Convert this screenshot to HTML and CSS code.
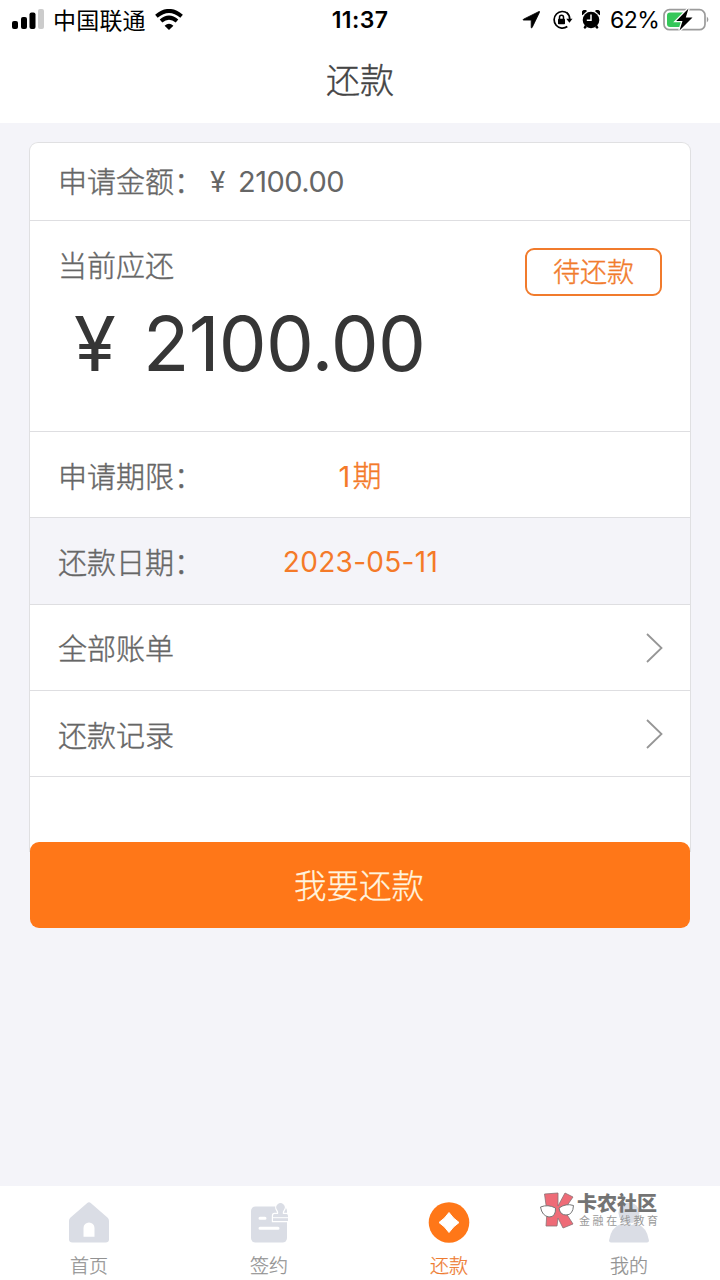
FILE: index.html
```html
<!DOCTYPE html>
<html lang="zh-CN">
<head>
<meta charset="utf-8">
<title>还款</title>
<link rel="stylesheet" href="styles.css">
</head>
<body>
<div class="screen">
  <header class="header">
    <div class="status">
      <div class="status-left">
        <svg class="signal" width="32" height="20" viewBox="0 0 32 20"><rect x="0" y="12" width="6" height="8" rx="2"/><rect x="9" y="8" width="6" height="12" rx="2"/><rect x="17.500" y="3.500" width="6" height="16.500" rx="2"/><rect x="26" y="0" width="6" height="20" rx="2" fill="#ccc"/></svg>
        <span class="carrier">中国联通</span>
        <svg class="wifi" width="28" height="21" viewBox="0 0 28 21"><g fill="none" stroke="#000" stroke-width="3.900"><path d="M1.400 7.200Q14-3.400 26.600 7.200"/><path d="M6 12.100Q14 5.200 22 12.100"/></g><path d="M9.600 16.700Q14 13 18.400 16.700L14 21Z"/></svg>
      </div>
      <time class="clock">11:37</time>
      <div class="status-right">
        <svg class="locate" width="18" height="18" viewBox="0 0 18 18"><path d="M17 .5Q18 .2 17.500 1.300L10.200 16.400Q9.500 17.600 9.200 16.300V9.100H1.700Q.3 8.900 1.500 8.200Z" stroke="#000" stroke-width=".8"/></svg>
        <svg class="rotation" width="21" height="20" viewBox="0 0 21 20"><path d="M15.700 3.400A8.300 8.300 0 1 0 15.300 16.500M14.600 2.500A8.300 8.300 0 0 1 17.700 9" fill="none" stroke="#000" stroke-width="1.700"/><path d="M14.300 8.700H20.500L17.400 12.700Z"/><rect x="6" y="8.800" width="7" height="5.500" rx=".8"/><path d="M7.500 9V7.300a2 2 0 0 1 4 0V9" fill="none" stroke="#000" stroke-width="1.500"/></svg>
        <svg class="alarm" width="18" height="20" viewBox="0 0 18 20"><circle cx="9" cy="10" r="8.300"/><path d="M.4 5.300A3 3 0 0 1 5.100 1Z M17.600 5.300A3 3 0 0 0 12.900 1Z M3 15L5 17L3 19L1.500 17.600Z M15 15L13 17L15 19L16.500 17.600Z"/><path d="M9 4.500V10.300H4.800" fill="none" stroke="#fff" stroke-width="1.500"/></svg>
        <span class="percent">62%</span>
        <svg class="battery" width="47" height="24" viewBox="0 0 47 24"><rect x="1" y="1.700" width="41" height="20" rx="5.500" fill="#fff" stroke="#9b9b9b" stroke-width="1.700"/><path d="M43.800 8.500Q47 11.500 43.800 14.500Z" fill="#999"/><path d="M7 4.500H20V19H7Q4 19 4 16V7.500Q4 4.500 7 4.500Z" fill="#35c759"/><path d="M25.500 .5L13.200 13H19.500L16.500 22.500L29.500 9.500H22.800Z" stroke="#fff" stroke-width="2.500" paint-order="stroke"/></svg>
      </div>
    </div>
    <h1 class="title">还款</h1>
  </header>

  <main class="content">
    <section class="card">
      <div class="row row-amount"><span class="label">申请金额：</span><span class="yen">¥</span><span class="value">2100.00</span></div>
      <div class="row due">
        <div>
          <div class="label">当前应还</div>
          <div class="due-amount"><span class="due-yen">¥</span><span>2100.00</span></div>
        </div>
        <span class="badge">待还款</span>
      </div>
      <div class="row line"><span class="label">申请期限：</span><span class="accent term">1<span class="unit">期</span></span></div>
      <div class="row line shaded"><span class="label">还款日期：</span><span class="accent date">2023-05-11</span></div>
      <div class="row line link"><span class="label">全部账单</span><svg class="chevron" width="17" height="30" viewBox="0 0 17 30"><path d="M1 1L15.500 15L1 29"/></svg></div>
      <div class="row line link"><span class="label">还款记录</span><svg class="chevron" width="17" height="30" viewBox="0 0 17 30"><path d="M1 1L15.500 15L1 29"/></svg></div>
      <div class="spacer"></div>
    </section>
    <button class="repay">我要还款</button>
  </main>

  <nav class="tabs">
    <a class="tab"><svg width="42" height="42" viewBox="0 0 42 42"><path fill="#dadde5" fill-rule="evenodd" d="M19 1.200Q21-.5 23 1.200L39.700 15.700Q41 17 41 19V37.500Q41 40.500 37.500 40.500H4.500Q1 40.500 1 37.500V19Q1 17 2.300 15.700ZM15.500 34.700H26.500V26A5.500 5.500 0 0 0 15.500 26Z"/></svg><span>首页</span></a>
    <a class="tab"><svg width="42" height="42" viewBox="0 0 42 42"><rect x="3" y="4.500" width="36" height="36" rx="4.500" fill="#dadde5"/><path d="M29.200 8A4.200 4.200 0 1 1 35.800 8Q34.300 10 35 12H38.500Q40 12 40 14V19H25V14Q25 12 26.500 12H30Q30.700 10 29.200 8Z" fill="#dadde5" stroke="#fff" stroke-width="2.400" paint-order="stroke"/><path d="M25 15.700H40" stroke="#fff" stroke-width="1"/><path d="M12 16.300H17M12 26.300H30" stroke="#fff" stroke-width="3" stroke-linecap="round"/></svg><span>签约</span></a>
    <a class="tab active"><svg width="42" height="42" viewBox="0 0 42 42"><circle cx="21" cy="20.500" r="20.300" fill="#ff7718"/><path d="M21 10.500Q25 16.500 31 20.500Q25 24.500 21 30.500Q17 24.500 11 20.500Q17 16.500 21 10.500Z" fill="#fff" stroke="#fff" stroke-linejoin="round"/></svg><span>还款</span></a>
    <a class="tab"><svg width="42" height="42" viewBox="0 0 42 42"><circle cx="21" cy="11" r="10.500" fill="#dadde5"/><path d="M1 38.500Q3 25 14 21.500Q21 25 28 21.500Q39 25 41 38.500Q41 40.500 39 40.500H3Q1 40.500 1 38.500Z" fill="#dadde5"/></svg><span>我的</span></a>
    <div class="watermark">
      <svg width="36" height="38" viewBox="0 0 36 38"><path d="M4.500 2L18 1V14L25 1L33 5L24 18L33 32L23 36L18 26L17 34L6 34L7 20Z" fill="#ee6b77" stroke="#8a7175" stroke-width=".8"/><path d="M.5 15Q8 12 15.500 16Q16 25 9 25Q2 24 .5 15ZM19 16Q26 11 33.500 13.500Q33 23 26 23Q20 23 19 16Z" fill="#fff" stroke="#777"/></svg>
      <div class="brand"><b>卡农社区</b><span>金融在线教育</span></div>
    </div>
  </nav>
</div>
</body>
</html>
```

FILE: styles.css
```css
* { box-sizing: border-box; }
body { margin: 0; font-family: Inter, "Noto Sans CJK SC", sans-serif; background: #f4f4f9; }
svg { display: block; flex: none; }
.screen { width: 720px; height: 1280px; display: flex; flex-direction: column; background: #f4f4f9; overflow: hidden; }
.header { height: 123px; background: #fff; }
.status { height: 39px; display: grid; grid-template-columns: 1fr auto 1fr; align-items: center; color: #000; }
.status-left { display: flex; align-items: center; padding-left: 12px; }
.signal { margin-top: -2px; }
.carrier { margin-left: 9px; font-size: 23px; line-height: 38px; letter-spacing: .2px; padding-top: 1px; }
.wifi { margin: -2px 0 0 9px; }
.clock { font-size: 23px; line-height: 39px; font-weight: 600; letter-spacing: .4px; padding-top: 1px; }
.status-right { display: flex; align-items: center; justify-content: flex-end; padding-right: 10px; }
.rotation { margin-left: 12px; }
.alarm { margin-left: 9px; }
.percent { margin-left: 10px; width: 50px; font-size: 23px; letter-spacing: -.5px; white-space: nowrap; }
.battery { margin-left: 3px; }
.title { margin: 0; height: 84px; color: #444; font-size: 34px; line-height: 84px; font-weight: 300; text-align: center; -webkit-text-stroke: .4px; }
.content { flex: 1; padding: 19px 29px 0; }
.card { border: 1px solid #e0e0e2; border-bottom: 0; border-radius: 9px 9px 0 0; background: #fff; overflow: hidden; }
.row { padding: 0 27px 0 28px; border-bottom: 1px solid #dedee1; color: #666; font-size: 29px; }
.label { font-size: 29px; font-weight: 300; white-space: nowrap; -webkit-text-stroke: .4px; }
.row-amount { display: flex; align-items: center; height: 78px; }
.row-amount .label { width: 152px; line-height: 40px; margin-top: 2px; }
.yen { width: 28px; font-size: 28px; }
.value { font-size: 29px; letter-spacing: -.5px; }
.due { display: flex; justify-content: space-between; height: 211px; padding-top: 27px; }
.due .label { line-height: 38px; }
.due-amount { display: flex; padding-left: 16px; color: #363636; font-size: 76px; line-height: 92px; margin-top: 11px; letter-spacing: -.7px; }
.due-yen { width: 69px; }
.badge { width: 137px; height: 48px; margin-right: 1px; border: 2px solid #f17b2c; border-radius: 9px; color: #f17b2c; font-size: 27px; line-height: 45px; text-align: center; font-weight: 300; -webkit-text-stroke: .4px; }
.line { display: grid; grid-template-columns: 160px 1fr 160px; align-items: center; height: 86.300px; }
.accent { color: #f47a29; text-align: center; font-size: 28px; }
.term { font-size: 29px; margin: -2px 0 0 -1px; }
.unit { margin-left: 2px; font-weight: 300; -webkit-text-stroke: .4px; }
.date { letter-spacing: .3px; padding-top: 2px; }
.shaded { background: #f4f4f9; }
.link .chevron { grid-column: 3; justify-self: end; margin-top: 1px; }
.chevron path { fill: none; stroke: #969696; stroke-width: 1.800; }
.spacer { height: 75px; }
.repay { display: block; width: 660px; height: 86px; margin: -10px 0 0 1px; position: relative; border: 0; border-radius: 9px; background: #ff7718; color: #fff4df; font: 300 32.500px/83px Inter, "Noto Sans CJK SC", sans-serif; padding: 3px 2px 0 0; -webkit-text-stroke: .3px; }
.tabs { position: relative; height: 94px; background: #fff; display: grid; grid-template-columns: repeat(4, 180px); }
.tab { display: flex; flex-direction: column; align-items: center; padding-top: 16px; color: #929292; font-size: 19px; line-height: 28px; font-weight: 300; -webkit-text-stroke: .25px; }
.tab svg { margin-left: -2px; }
.tab span { margin: 9px 0 0 -2px; }
.active { color: #ee7b30; }
.watermark { position: absolute; left: 540px; top: 6px; display: flex; }
.brand { display: flex; flex-direction: column; padding-left: 1px; color: #747474; }
.brand b { font-size: 20px; line-height: 25px; font-weight: 900; white-space: nowrap; }
.brand span { font-size: 11px; line-height: 9px; letter-spacing: 2.600px; padding-left: 2px; color: #999; white-space: nowrap; }
```
